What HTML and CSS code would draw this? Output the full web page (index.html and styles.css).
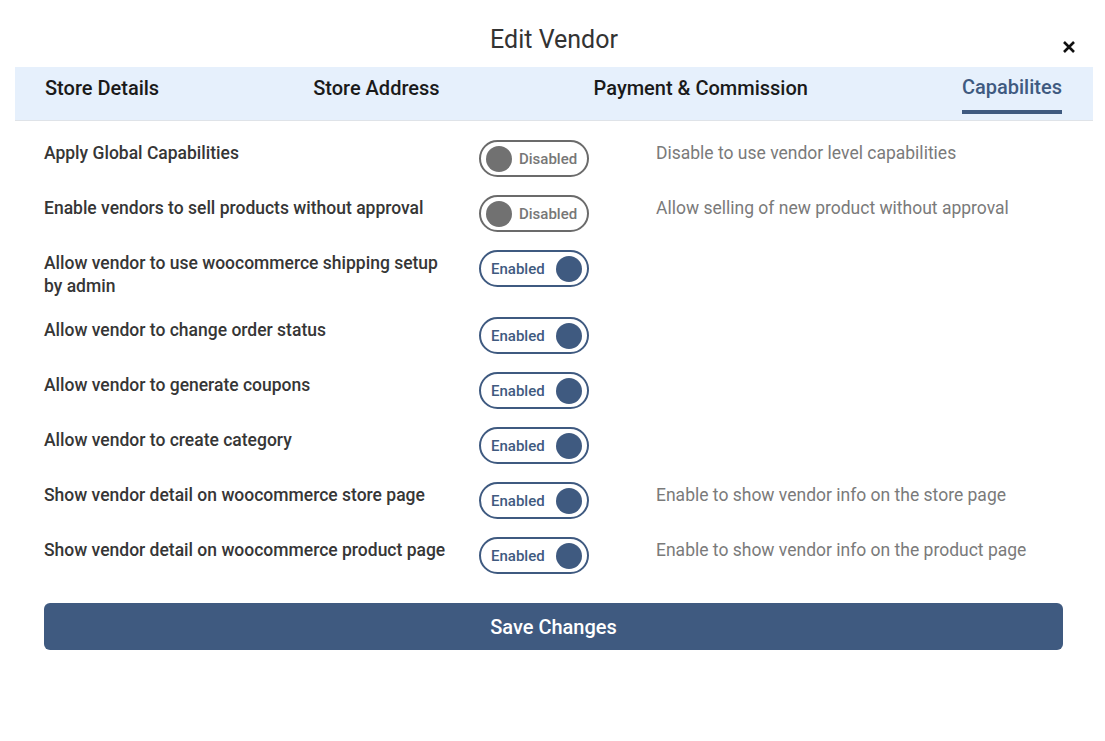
FILE: index.html
```html
<!DOCTYPE html>
<html>
<head>
<meta charset="utf-8">
<title>Edit Vendor</title>
<link rel="stylesheet" href="styles.css">
</head>
<body>
<div class="modal">
  <div class="modal-head">
    <h1 class="title">Edit Vendor</h1>
    <button class="close" aria-label="Close">
      <svg width="14" height="14" viewBox="0 0 14 14"><path d="M2 2 L12 12 M12 2 L2 12" stroke="#111" stroke-width="2.6" stroke-linecap="butt"/></svg>
    </button>
  </div>
  <nav class="tabs">
    <span class="tab">Store Details</span>
    <span class="tab">Store Address</span>
    <span class="tab">Payment &amp; Commission</span>
    <span class="tab active">Capabilites</span>
  </nav>
  <div class="content">
    <div class="grid">
      <div class="label">Apply Global Capabilities</div>
      <div class="toggle off"><span class="knob"></span><span class="tt">Disabled</span></div>
      <div class="desc">Disable to use vendor level capabilities</div>

      <div class="label">Enable vendors to sell products without approval</div>
      <div class="toggle off"><span class="knob"></span><span class="tt">Disabled</span></div>
      <div class="desc">Allow selling of new product without approval</div>

      <div class="label">Allow vendor to use woocommerce shipping setup by admin</div>
      <div class="toggle on"><span class="tt">Enabled</span><span class="knob"></span></div>
      <div class="desc"></div>

      <div class="label">Allow vendor to change order status</div>
      <div class="toggle on"><span class="tt">Enabled</span><span class="knob"></span></div>
      <div class="desc"></div>

      <div class="label">Allow vendor to generate coupons</div>
      <div class="toggle on"><span class="tt">Enabled</span><span class="knob"></span></div>
      <div class="desc"></div>

      <div class="label">Allow vendor to create category</div>
      <div class="toggle on"><span class="tt">Enabled</span><span class="knob"></span></div>
      <div class="desc"></div>

      <div class="label">Show vendor detail on woocommerce store page</div>
      <div class="toggle on"><span class="tt">Enabled</span><span class="knob"></span></div>
      <div class="desc">Enable to show vendor info on the store page</div>

      <div class="label">Show vendor detail on woocommerce product page</div>
      <div class="toggle on"><span class="tt">Enabled</span><span class="knob"></span></div>
      <div class="desc">Enable to show vendor info on the product page</div>
    </div>
    <button class="save">Save Changes</button>
  </div>
</div>
</body>
</html>
```

FILE: styles.css
```css
* { box-sizing: border-box; }
html, body { margin: 0; padding: 0; background: #fff; }
body { font-family: Roboto, "Noto Sans", Arial, sans-serif; color: #333; }

.modal { padding: 0 12px 0 15px; }

.modal-head {
  position: relative;
  height: 67px;
  display: flex;
  align-items: flex-start;
  justify-content: center;
}
.title {
  margin: 24px 0 0;
  font-size: 25px;
  font-weight: 400;
  line-height: 32px;
  color: #333;
}
.close {
  position: absolute;
  right: 17px;
  top: 40px;
  border: 0;
  background: none;
  padding: 0;
  width: 14px;
  height: 14px;
  cursor: pointer;
}
.close svg { display: block; }

.tabs {
  display: flex;
  justify-content: space-between;
  align-items: flex-start;
  height: 54px;
  padding: 0 31px 0 30px;
  background: #e6f0fc;
  border-bottom: 1px solid #dfe3e8;
}
.tab {
  font-size: 20px;
  font-weight: 500;
  color: #1a1a1a;
  line-height: 24px;
  padding-top: 9px;
  height: 47px;
}
.tab.active {
  color: #3f5a80;
  padding-top: 8px;
  border-bottom: 4px solid #3f5a80;
}

.content { padding: 19px 30px 0 29px; }

.grid {
  display: grid;
  grid-template-columns: 435px 110px 1fr;
  column-gap: 0;
  row-gap: 18px;
  align-items: start;
}
.label {
  font-size: 17.5px;
  font-weight: 500;
  line-height: 23px;
  color: #363636;
  padding: 2px 24px 1px 0;
}
.desc {
  font-size: 17.5px;
  font-weight: 400;
  line-height: 23px;
  color: #7a7a7a;
  padding: 2px 0 0 67px;
}

.toggle {
  height: 37px;
  width: 110px;
  border-radius: 19px;
  border: 2px solid #666;
  display: flex;
  align-items: center;
  padding: 0 5px;
}
.toggle .knob {
  width: 26px;
  height: 26px;
  border-radius: 50%;
  flex: none;
}
.toggle .tt { font-size: 15px; font-weight: 500; line-height: 20px; }
.toggle.off { border-color: #6b6b6b; }
.toggle.off .knob { background: #717171; }
.toggle.off .tt { color: #777; margin-left: 7px; }
.toggle.on { border-color: #3f5a80; justify-content: space-between; padding-left: 10px; padding-right: 5px; }
.toggle.on .knob { background: #3f5a80; }
.toggle.on .tt { color: #3f5a80; }

.save {
  display: block;
  width: 100%;
  margin-top: 29px;
  height: 47px;
  border: 0;
  border-radius: 6px;
  background: #3f5a80;
  color: #fff;
  font-family: Roboto, "Noto Sans", Arial, sans-serif;
  font-size: 20px;
  font-weight: 500;
  cursor: pointer;
}
```
